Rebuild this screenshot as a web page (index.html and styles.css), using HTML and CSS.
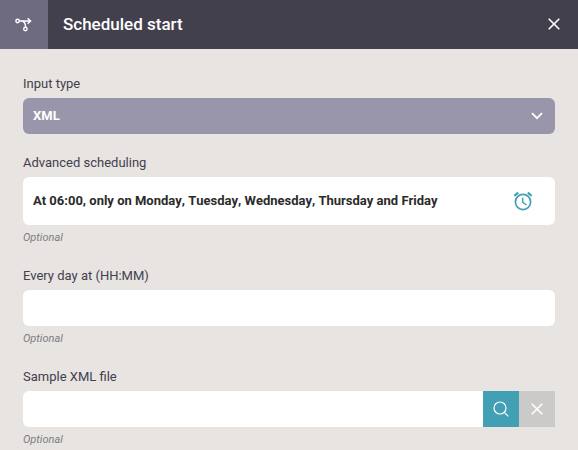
FILE: index.html
```html
<!DOCTYPE html>
<html lang="en">
<head>
    <meta charset="UTF-8">
    <meta name="viewport" content="width=device-width, initial-scale=1.0">
    <title>Scheduled start</title>
    <link rel="stylesheet" href="styles.css">
</head>
<body>
    <!-- Panel header -->
    <header class="header">
        <div class="header-icon">
            <svg width="18" height="16" viewBox="0 0 18 16" fill="none" stroke="currentColor" stroke-width="1.4">
                <circle cx="2.6" cy="4" r="1.7"/>
                <circle cx="10.4" cy="12" r="1.7"/>
                <path d="M4.3 4H15.5M12.6 1.2L15.6 4L12.6 6.8M6 4C9 4 10.6 6 10.6 10.3"/>
            </svg>
        </div>
        <h1>Scheduled start</h1>
        <button class="close-button" type="button" aria-label="Close">
            <svg width="12" height="12" viewBox="0 0 12 12" fill="none" stroke="currentColor" stroke-width="1.6">
                <path d="M0.7 0.7L11.3 11.3M11.3 0.7L0.7 11.3"/>
            </svg>
        </button>
    </header>

    <form class="form">
        <div class="field">
            <label for="input-type">Input type</label>
            <div class="select-wrap">
                <select id="input-type">
                    <option>XML</option>
                </select>
                <svg class="chevron" width="12" height="8" viewBox="0 0 12 8" fill="none" stroke="currentColor" stroke-width="1.8">
                    <path d="M1 1.2L6 6.2L11 1.2"/>
                </svg>
            </div>
        </div>

        <div class="field">
            <label for="schedule">Advanced scheduling</label>
            <div class="schedule-box">
                <input id="schedule" type="text" value="At 06:00, only on Monday, Tuesday, Wednesday, Thursday and Friday" readonly>
                <button class="clock-button" type="button" aria-label="Edit schedule">
                    <svg width="20" height="20" viewBox="0 0 20 20" fill="none" stroke="currentColor" stroke-width="1.7">
                        <circle cx="10" cy="11" r="7.6"/>
                        <path d="M9.7 6.8V11.3L13.5 14" stroke-width="1.5"/>
                        <path d="M1.4 4.8L5.2 1.6M18.6 4.8L14.8 1.6" stroke-width="2.2"/>
                    </svg>
                </button>
            </div>
            <p class="hint">Optional</p>
        </div>

        <div class="field">
            <label for="every-day">Every day at (HH:MM)</label>
            <input id="every-day" class="text-input" type="text">
            <p class="hint">Optional</p>
        </div>

        <div class="field">
            <label for="sample-file">Sample XML file</label>
            <div class="file-box">
                <input id="sample-file" class="text-input" type="text">
                <button class="search-button" type="button" aria-label="Browse">
                    <svg width="16" height="16" viewBox="0 0 16 16" fill="none" stroke="currentColor" stroke-width="1.2">
                        <circle cx="7" cy="7" r="6"/>
                        <path d="M11.3 11.3L15.3 15.3"/>
                    </svg>
                </button>
                <button class="clear-button" type="button" aria-label="Clear">
                    <svg width="12" height="12" viewBox="0 0 12 12" fill="none" stroke="currentColor" stroke-width="1.6">
                        <path d="M0.7 0.7L11.3 11.3M11.3 0.7L0.7 11.3"/>
                    </svg>
                </button>
            </div>
            <p class="hint">Optional</p>
        </div>
    </form>
</body>
</html>
```
FILE: styles.css
```css
* {
    box-sizing: border-box;
}

body {
    font-family: Roboto, sans-serif;
    font-size: 13px;
    margin: 0;
    background-color: #e7e4e1;
    color: #43404e;
}

button {
    display: flex;
    align-items: center;
    justify-content: center;
    border: none;
    padding: 0;
    background: none;
    cursor: pointer;
}

input,
select {
    font-family: inherit;
    font-size: 13px;
}

/* Header */
.header {
    display: flex;
    height: 49px;
    background-color: #43404e;
    color: white;
}

.header-icon {
    display: flex;
    align-items: center;
    justify-content: center;
    width: 48px;
    background-color: #6e6b81;
}

.header h1 {
    flex: 1;
    margin: 0;
    padding-left: 15px;
    font-size: 17px;
    font-weight: 500;
    line-height: 48px;
}

.close-button {
    width: 48px;
    padding-bottom: 1px;
    color: white;
}

/* Form fields */
.form {
    padding: 25px 23px 0;
}

.field {
    margin-bottom: 19px;
}

.field:last-child {
    margin-bottom: 0;
}

.field label {
    display: block;
    margin-bottom: 4px;
    line-height: 20px;
}

.hint {
    margin: 4px 0 0;
    font-size: 11px;
    font-style: italic;
    line-height: 18px;
    color: #7f7c83;
}

.text-input {
    display: block;
    width: 100%;
    height: 36px;
    padding: 0 10px 2px;
    border: none;
    border-radius: 6px;
    background-color: white;
}

/* Drop-down */
.select-wrap {
    position: relative;
    color: white;
}

.select-wrap select {
    display: block;
    width: 100%;
    height: 36px;
    padding: 0 10px 2px;
    border: none;
    border-radius: 6px;
    background-color: #9996ab;
    color: white;
    font-weight: 700;
    appearance: none;
}

.chevron {
    position: absolute;
    top: 14px;
    right: 12px;
    pointer-events: none;
}

/* Schedule */
.schedule-box {
    display: flex;
    height: 48px;
    border-radius: 6px;
    background-color: white;
}

.schedule-box input {
    flex: 1;
    min-width: 0;
    padding: 0 0 2px 10px;
    border: none;
    background: none;
    color: #2b2b2b;
    font-weight: 700;
    font-kerning: none;
}

.clock-button {
    width: 64px;
    color: #41a0b3;
}

/* File picker */
.file-box {
    display: flex;
}

.file-box .text-input {
    flex: 1;
    min-width: 0;
    border-radius: 6px 0 0 6px;
}

.file-box button {
    width: 36px;
    color: white;
}

.file-box .search-button {
    background-color: #41a0b3;
}

.file-box .clear-button {
    background-color: #cccac9;
}
```
